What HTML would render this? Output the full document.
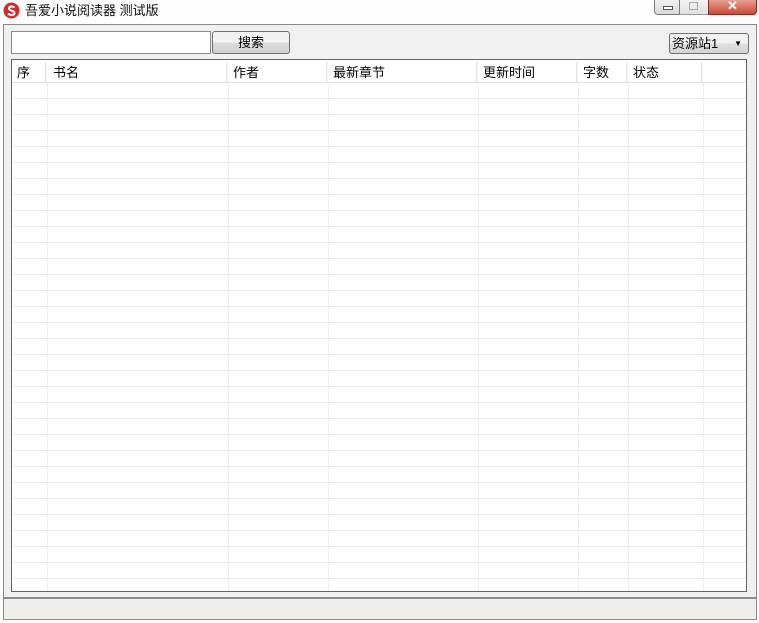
<!DOCTYPE html>
<html><head><meta charset="utf-8"><style>
*{margin:0;padding:0;box-sizing:border-box}
body{width:759px;height:623px;background:#fdfdfd;position:relative;overflow:hidden;font-family:"Liberation Sans","Noto Sans CJK SC","WenQuanYi Zen Hei",sans-serif;font-size:12px;color:#000}
.abs{position:absolute}
#client{left:3px;top:24px;width:754px;height:574px;background:#f0f0f0;border:1px solid #8a8a8a}
#status{left:3px;top:598px;width:754px;height:22px;background:#f0eded;border:1px solid #8a8a8a}
#grid{left:11px;top:59px;width:736px;height:533px;border:1px solid #646464;background:#fff;
background-image:repeating-linear-gradient(to bottom,transparent 0,transparent 15px,#ececec 15px,#ececec 16px);background-position:0 23px;background-origin:padding-box}
.hdr{left:0;top:0;width:734px;height:23px;background:#fff;border-bottom:1px solid #e3e3e3}
.vl{position:absolute;top:23px;bottom:0;width:1px;background:#f0f0f0}
.hs{position:absolute;top:2px;height:20px;width:2px;border-left:1px solid #e5e5e5;border-right:1px solid #f3f3f3}
.ht{position:absolute;top:2px;font-size:13px}
</style></head><body>
<svg class="abs" style="left:3px;top:2px" width="17" height="17" viewBox="0 0 17 17"><circle cx="8.5" cy="8.5" r="8" fill="#d22b2b"/><path d="M11.5 5.5C10 4 6 4 6 6.5S11.5 8.5 11.5 11S7 13.5 5 11.5" stroke="#fff" stroke-width="2" fill="none"/></svg>
<div class="abs" style="left:25px;top:0px;font-size:13px;color:#111">吾爱小说阅读器 测试版</div>
<div class="abs" style="left:654px;top:0;width:26px;height:15px;border:1px solid #7a7a7a;border-top:none;border-radius:0 0 0 4px;background:linear-gradient(#f2f2f2,#d8d8d8)"><div class="abs" style="left:8px;top:6px;width:10px;height:4px;border:1px solid #555;background:#fff"></div></div>
<div class="abs" style="left:680px;top:0;width:28px;height:15px;border-bottom:1px solid #9a9a9a;background:linear-gradient(#f4f4f4,#e0e0e0)"><div class="abs" style="left:9px;top:2px;width:9px;height:8px;border:1px solid #aaa"></div></div>
<div class="abs" style="left:708px;top:0;width:49px;height:15px;border:1px solid #8a2a20;border-top:none;border-radius:0 0 4px 0;background:linear-gradient(#e8a090,#c84a36);color:#fff;text-align:center;font-weight:bold;font-size:13px;line-height:12px">✕</div>
<div id="client" class="abs"></div>
<div class="abs" style="left:11px;top:31px;width:200px;height:23px;background:#fff;border:1px solid #8a8a8a"></div>
<div class="abs" style="left:212px;top:31px;width:78px;height:23px;border:1px solid #707070;border-radius:3px;background:linear-gradient(#f2f2f2 50%,#dddddd 50%,#cfcfcf);text-align:center;font-size:13px;line-height:22px">搜索</div>
<div class="abs" style="left:669px;top:33px;width:80px;height:21px;border:1px solid #707070;border-radius:3px;background:linear-gradient(#f2f2f2 50%,#e0e0e0 50%,#d4d4d4);font-size:13px;line-height:19px;padding-left:2px">资源站1<span style="position:absolute;right:6px;top:0;font-size:8px">▼</span></div>
<div id="grid" class="abs">
<div class="abs hdr"></div>
<div class="hs" style="left:33px"></div><div class="hs" style="left:214px"></div><div class="hs" style="left:314px"></div><div class="hs" style="left:464px"></div><div class="hs" style="left:564px"></div><div class="hs" style="left:614px"></div><div class="hs" style="left:689px"></div>
<div class="vl" style="left:35px"></div><div class="vl" style="left:216px"></div><div class="vl" style="left:316px"></div><div class="vl" style="left:466px"></div><div class="vl" style="left:566px"></div><div class="vl" style="left:616px"></div><div class="vl" style="left:691px"></div>
<div class="ht" style="left:5px">序</div><div class="ht" style="left:41px">书名</div><div class="ht" style="left:221px">作者</div><div class="ht" style="left:321px">最新章节</div><div class="ht" style="left:471px">更新时间</div><div class="ht" style="left:571px">字数</div><div class="ht" style="left:621px">状态</div>
</div>
<div id="status" class="abs"></div>
</body></html>
